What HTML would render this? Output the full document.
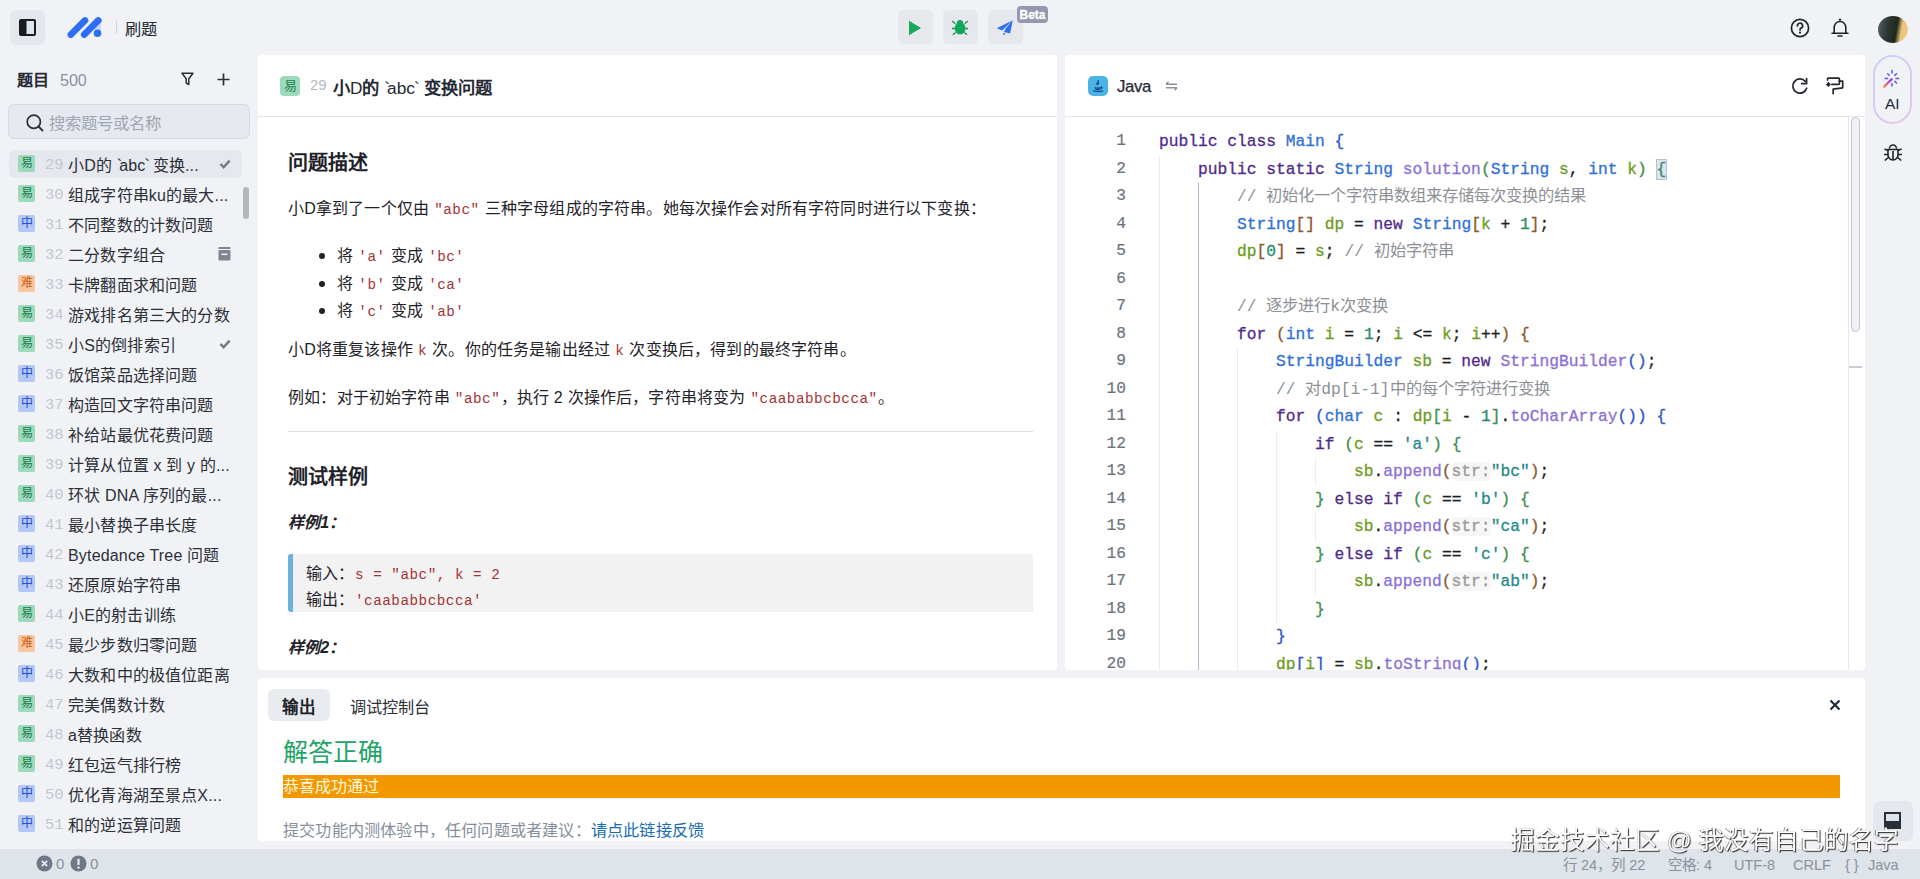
<!DOCTYPE html>
<html lang="zh-CN"><head><meta charset="utf-8">
<style>
*{box-sizing:border-box;margin:0;padding:0}
html,body{width:1920px;height:879px;overflow:hidden}
body{background:#f1f2f6;font-family:"Liberation Sans",sans-serif;color:#252933;position:relative}
.abs{position:absolute}
/* top bar */
#tgl{left:10px;top:10px;width:35px;height:35px;background:#e4e7ed;border-radius:6px}
#topsep{left:116px;top:21px;width:1px;height:13px;background:#d0d3d9}
#brand{left:125px;top:19px;font-size:16.3px;color:#252933;line-height:20px}
.tbtn{top:10px;width:35px;height:34px;background:#e6e8ee;border-radius:5px}
#beta{left:1017px;top:6px;width:31px;height:17px;background:#9497ae;border-radius:4px;color:#fff;font-size:12px;font-weight:bold;text-align:center;line-height:19px;-webkit-text-stroke:.3px #fff}
/* sidebar */
#sbtitle{left:17px;top:70.5px;font-size:16px;font-weight:bold;line-height:20px}
#sbcount{left:60px;top:70.5px;font-size:16px;color:#8a919f;line-height:20px}
#search{left:8px;top:104px;width:242px;height:35px;background:#e6e9f0;border:1px solid #d6dae2;border-radius:6px}
#search span{position:absolute;left:40px;top:8px;font-size:16.4px;color:#a0a6b1;line-height:20px}
.row{position:absolute;left:9px;width:233px;height:28px}
.row.sel{background:#e5e8ef;border-radius:6px}
.bdg{position:absolute;left:9px;top:5px;width:17px;height:17px;border-radius:2px;font-size:12px;line-height:17px;text-align:center}
.e{background:#9dd9bb;color:#1c7d4d}
.m{background:#b3c7f8;color:#1f4fcc}
.h{background:#f8c6a0;color:#cc6218}
.num{position:absolute;left:36px;top:5px;font-family:"Liberation Mono",monospace;font-size:15.5px;color:#c3c7ce;line-height:20px}
.ttl{position:absolute;left:59px;top:4.5px;font-size:16px;letter-spacing:.17px;color:#2b2f36;line-height:22px;white-space:nowrap}
/* panels */
.panel{position:absolute;background:#fff;border-radius:4px;overflow:hidden}
#pp{left:258px;top:55px;width:799px;height:615px}
#cp{left:1065px;top:55px;width:800px;height:615px}
#op{left:258px;top:678px;width:1607px;height:163px}
.phead{position:absolute;left:0;top:0;width:100%;height:62px;border-bottom:1px solid #e4e6eb}
#status{left:0;top:849px;width:1920px;height:30px;background:#dfe3ea}
.st{position:absolute;top:7px;font-size:14.5px;color:#8a929c;line-height:18px;white-space:nowrap}
/* problem content */
.pc{position:absolute;left:30px;width:745px;color:#1f2329}
.h3{font-size:20px;font-weight:bold;line-height:28px}
.p{font-size:16px;line-height:24px;letter-spacing:.17px}
code,.mono{font-family:"Liberation Mono",monospace;color:#a33436;font-size:14.3px;letter-spacing:.5px;padding:0 .5px}
/* code */
.ln{position:absolute;left:0;width:61px;text-align:right;font-family:"Liberation Mono",monospace;font-size:16.2px;color:#6d7480;line-height:27.5px;-webkit-text-stroke:.2px}
.cl{position:absolute;left:94px;white-space:pre;font-family:"Liberation Mono",monospace;font-size:16.25px;line-height:27.5px;color:#1b1f24;-webkit-text-stroke:.3px}
.kw{color:#4f2a8c}.ty{color:#2f6fd9}.fn{color:#8b6fd8}.va{color:#6e9c1f}.nu{color:#2b8a68}.st2{color:#1f8a8a}.cm{color:#8c9096;-webkit-text-stroke:0}
.hint{color:#9a9a9a;background:#f6f6f6;border-radius:3px}
.hl{background:#dde3f6;outline:1px solid #b8bfda}
</style></head>
<body>
<div class="abs" id="tgl"><svg class="abs" style="left:9px;top:9px" width="17" height="17" viewBox="0 0 17 17"><rect x="1" y="1" width="15" height="15" rx="1" fill="#dde6ef" stroke="#1b1b1f" stroke-width="2"/><rect x="1" y="1" width="6.5" height="15" fill="#1b1b1f"/></svg></div>
<svg class="abs" style="left:66px;top:16px" width="38" height="24" viewBox="0 0 38 24"><path d="M35 4.2L35 15L27 13Z" fill="#c6d7f9"/><path d="M4.8 18.6L19 4.4M18.2 18.6L32.3 4.4" stroke="#2d6ef5" stroke-width="6.6" stroke-linecap="round"/><circle cx="31.5" cy="17.3" r="3.8" fill="#2d6ef5"/></svg>
<div class="abs" id="topsep"></div>
<div class="abs" id="brand">刷题</div>
<div class="abs tbtn" style="left:898px"><svg class="abs" style="left:10px;top:10px" width="14" height="16" viewBox="0 0 14 16"><path d="M1 .8L13 8L1 15.2Z" fill="#16a85b"/></svg></div>
<div class="abs tbtn" style="left:943px"><svg class="abs" style="left:8px;top:9px" width="18" height="18" viewBox="0 0 18 18"><ellipse cx="9" cy="4.2" rx="3.2" ry="3.2" fill="#0fa85a"/><ellipse cx="9.1" cy="9.6" rx="5.5" ry="6" fill="#0fa85a"/><path d="M1.1 2.1L4.3 4.8M16.9 2.1L13.7 4.8M.9 9.5H3.8M17.1 9.5H14.4M1.8 15.8L4.6 13.6M16.2 15.8L13.4 13.6" stroke="#1f8a55" stroke-width="1.3"/></svg></div>
<div class="abs tbtn" style="left:988px"><svg class="abs" style="left:8px;top:9px" width="18" height="18" viewBox="0 0 18 18"><path d="M16.8 1.2L0.8 9.3L6.2 11.6L9.2 8.4Z" fill="#2c6ef5"/><path d="M16.8 1.2L9.9 9.3L8 13L14.1 14.6Z" fill="#2c6ef5"/><path d="M7.4 13.9L9.2 14.3L8.1 15.9L7.1 15.4Z" fill="#2c55c8"/></svg></div>
<div class="abs" id="beta">Beta</div>
<svg class="abs" style="left:1790px;top:18px" width="20" height="20" viewBox="0 0 20 20"><circle cx="10" cy="10" r="8.6" fill="none" stroke="#1f2329" stroke-width="1.7"/><path d="M7.4 7.8a2.6 2.6 0 1 1 3.8 2.3c-.8.4-1.2.9-1.2 1.8" fill="none" stroke="#1f2329" stroke-width="1.7" stroke-linecap="round"/><circle cx="10" cy="14.6" r="1.1" fill="#1f2329"/></svg>
<svg class="abs" style="left:1830px;top:18px" width="20" height="20" viewBox="0 0 20 20"><path d="M4.2 15V9.3a5.8 5.8 0 0 1 11.6 0V15M2 15.2H18M8 18H12M9.4 1.6h1.2" fill="none" stroke="#1f2329" stroke-width="1.6" stroke-linecap="round"/></svg>
<div class="abs" style="left:1878px;top:16px;width:30px;height:27px;border-radius:50%;background:linear-gradient(100deg,#59636a 0%,#2c3530 35%,#1e2a1c 60%,#e8c47c 75%,#f2cd88 100%)"></div>
<div class="abs" style="left:1873px;top:55px;width:39px;height:69px;border-radius:20px;padding:2px;background:linear-gradient(135deg,#c9d3fb,#d8c8f3 50%,#e8c6e8)"><div style="width:35px;height:65px;border-radius:18px;background:#f1f2f6"></div></div>
<svg class="abs" style="left:1882px;top:69px" width="20" height="20" viewBox="0 0 20 20"><defs><linearGradient id="wg" x1="0" y1="1" x2="1" y2="0"><stop offset="0" stop-color="#f58a3a"/><stop offset=".6" stop-color="#c04fc8"/><stop offset="1" stop-color="#7a40e8"/></linearGradient></defs><path d="M2.2 17.6L9.6 10.2" stroke="url(#wg)" stroke-width="2.3" stroke-linecap="round"/><path d="M10 1.5V4M10 14.6V17M16.6 9.4H14M5.6 9.4H3.2M14.5 4.8L12.9 6.4M5.7 4.8L7.1 6.2M14.5 14L12.9 12.4" stroke="#5a58ea" stroke-width="1.5" stroke-linecap="round"/></svg>
<div class="abs" style="left:1885px;top:95px;font-size:15.5px;color:#252933;line-height:18px">AI</div>
<svg class="abs" style="left:1883px;top:142px" width="20" height="21" viewBox="0 0 20 21"><path d="M6.5 6.5a3.5 3.5 0 0 1 7 0" fill="none" stroke="#1f2329" stroke-width="1.6"/><path d="M5 7.5H15V13a5 5 0 0 1-10 0Z" fill="none" stroke="#1f2329" stroke-width="1.6"/><path d="M10 9V18M1.5 7L5 8.5M18.5 7L15 8.5M1 12.5H5M19 12.5H15M1.8 18.5L5.3 15.5M18.2 18.5L14.7 15.5" stroke="#1f2329" stroke-width="1.6"/></svg>
<div class="abs" style="left:1873px;top:801px;width:40px;height:40px;border-radius:7px;background:#e4e7ed"><svg class="abs" style="left:11px;top:11px" width="17" height="17" viewBox="0 0 17 17"><rect x="1" y="1" width="15" height="15" fill="#dde6ef" stroke="#2a2e36" stroke-width="2"/><rect x="1" y="9" width="15" height="7" fill="#2a2e36"/></svg></div>


<div class="abs" id="sbtitle">题目</div>
<div class="abs" id="sbcount">500</div>
<div class="abs" id="search"><svg class="abs" style="left:17px;top:9px" width="18" height="18" viewBox="0 0 18 18"><circle cx="7.8" cy="7.8" r="6.6" fill="none" stroke="#2b2f36" stroke-width="1.7"/><path d="M12.5 12.5L16.5 16.5" stroke="#2b2f36" stroke-width="1.8" stroke-linecap="round"/></svg><span>搜索题号或名称</span></div>
<svg class="abs" style="left:181px;top:72px" width="13" height="14" viewBox="0 0 13 14"><path d="M1 1.2H12L7.8 6.8V12.6L5.2 11V6.8Z" fill="none" stroke="#2b2f36" stroke-width="1.5" stroke-linejoin="round"/></svg>
<svg class="abs" style="left:217px;top:73px" width="13" height="13" viewBox="0 0 13 13"><path d="M6.5 .5V12.5M.5 6.5H12.5" stroke="#2b2f36" stroke-width="1.7"/></svg>


<div class="row sel" style="top:150px"><div class="bdg e">易</div><div class="num">29</div><div class="ttl">小D的 <span style="margin-right:-3px">`</span>abc<span style="margin-left:-1px;margin-right:-2px">`</span> 变换...</div><svg class="abs" style="left:210px;top:8px" width="12" height="12" viewBox="0 0 12 12"><path d="M1.5 6L4.6 9.2L10.6 2.6" fill="none" stroke="#737984" stroke-width="2.4"/></svg></div>
<div class="row" style="top:180px"><div class="bdg e">易</div><div class="num">30</div><div class="ttl">组成字符串ku的最大...</div></div>
<div class="row" style="top:210px"><div class="bdg m">中</div><div class="num">31</div><div class="ttl">不同整数的计数问题</div></div>
<div class="row" style="top:240px"><div class="bdg e">易</div><div class="num">32</div><div class="ttl">二分数字组合</div><svg class="abs" style="left:209px;top:7px" width="13" height="14" viewBox="0 0 13 14"><rect x="0.5" y="0" width="12" height="2" rx=".8" fill="#7f858f"/><rect x="0.5" y="3" width="12" height="10.5" rx="1.2" fill="#7f858f"/><rect x="3.5" y="6.5" width="6" height="1.6" fill="#eef0f4"/></svg></div>
<div class="row" style="top:270px"><div class="bdg h">难</div><div class="num">33</div><div class="ttl">卡牌翻面求和问题</div></div>
<div class="row" style="top:300px"><div class="bdg e">易</div><div class="num">34</div><div class="ttl">游戏排名第三大的分数</div></div>
<div class="row" style="top:330px"><div class="bdg e">易</div><div class="num">35</div><div class="ttl">小S的倒排索引</div><svg class="abs" style="left:210px;top:8px" width="12" height="12" viewBox="0 0 12 12"><path d="M1.5 6L4.6 9.2L10.6 2.6" fill="none" stroke="#737984" stroke-width="2.4"/></svg></div>
<div class="row" style="top:360px"><div class="bdg m">中</div><div class="num">36</div><div class="ttl">饭馆菜品选择问题</div></div>
<div class="row" style="top:390px"><div class="bdg m">中</div><div class="num">37</div><div class="ttl">构造回文字符串问题</div></div>
<div class="row" style="top:420px"><div class="bdg e">易</div><div class="num">38</div><div class="ttl">补给站最优花费问题</div></div>
<div class="row" style="top:450px"><div class="bdg e">易</div><div class="num">39</div><div class="ttl">计算从位置 x 到 y 的...</div></div>
<div class="row" style="top:480px"><div class="bdg e">易</div><div class="num">40</div><div class="ttl">环状 DNA 序列的最...</div></div>
<div class="row" style="top:510px"><div class="bdg m">中</div><div class="num">41</div><div class="ttl">最小替换子串长度</div></div>
<div class="row" style="top:540px"><div class="bdg m">中</div><div class="num">42</div><div class="ttl">Bytedance Tree 问题</div></div>
<div class="row" style="top:570px"><div class="bdg m">中</div><div class="num">43</div><div class="ttl">还原原始字符串</div></div>
<div class="row" style="top:600px"><div class="bdg e">易</div><div class="num">44</div><div class="ttl">小E的射击训练</div></div>
<div class="row" style="top:630px"><div class="bdg h">难</div><div class="num">45</div><div class="ttl">最少步数归零问题</div></div>
<div class="row" style="top:660px"><div class="bdg m">中</div><div class="num">46</div><div class="ttl">大数和中的极值位距离</div></div>
<div class="row" style="top:690px"><div class="bdg e">易</div><div class="num">47</div><div class="ttl">完美偶数计数</div></div>
<div class="row" style="top:720px"><div class="bdg e">易</div><div class="num">48</div><div class="ttl">a替换函数</div></div>
<div class="row" style="top:750px"><div class="bdg e">易</div><div class="num">49</div><div class="ttl">红包运气排行榜</div></div>
<div class="row" style="top:780px"><div class="bdg m">中</div><div class="num">50</div><div class="ttl">优化青海湖至景点X...</div></div>
<div class="row" style="top:810px"><div class="bdg m">中</div><div class="num">51</div><div class="ttl">和的逆运算问题</div></div>
<div class="abs" style="left:243px;top:187px;width:6px;height:32px;border-radius:3px;background:#b3b7be"></div>
<div class="panel" id="pp"><div class="phead"></div>
<div class="bdg e abs" style="left:22px;top:21px;width:20px;height:20px;line-height:20px;font-size:13px;border-radius:4px">易</div>
<div class="abs" style="left:52px;top:22px;font-size:15px;color:#b5bac3;line-height:16px">29</div>
<div class="abs" style="left:75px;top:20.5px;font-size:17.3px;font-weight:bold;color:#252933;line-height:24px;white-space:nowrap">小<span style="font-weight:normal">D</span>的 <span style="font-weight:normal"><span style="margin-right:-3px">`</span>abc<span style="margin-left:-1px;margin-right:-1px">`</span></span> 变换问题</div>
<div class="pc h3" style="top:93.5px">问题描述</div>
<div class="pc p" style="top:141.5px">小D拿到了一个仅由 <code>"abc"</code> 三种字母组成的字符串。她每次操作会对所有字符同时进行以下变换：</div>
<div class="abs" style="left:61px;top:197.5px;width:6px;height:6px;border-radius:3px;background:#1f2329"></div>
<div class="abs" style="left:61px;top:225.5px;width:6px;height:6px;border-radius:3px;background:#1f2329"></div>
<div class="abs" style="left:61px;top:252.5px;width:6px;height:6px;border-radius:3px;background:#1f2329"></div>
<div class="pc p" style="left:79px;top:188.5px">将 <code>'a'</code> 变成 <code>'bc'</code></div>
<div class="pc p" style="left:79px;top:216.5px">将 <code>'b'</code> 变成 <code>'ca'</code></div>
<div class="pc p" style="left:79px;top:243.5px">将 <code>'c'</code> 变成 <code>'ab'</code></div>
<div class="pc p" style="top:282.5px">小D将重复该操作 <code>k</code> 次。你的任务是输出经过 <code>k</code> 次变换后，得到的最终字符串。</div>
<div class="pc p" style="top:330.5px">例如：对于初始字符串 <code>"abc"</code>，执行 2 次操作后，字符串将变为 <code>"caababbcbcca"</code>。</div>
<div class="abs" style="left:30px;top:375.5px;width:745px;height:1px;background:#dcdee2"></div>
<div class="pc h3" style="top:407.5px">测试样例</div>
<div class="pc p" style="top:455.5px;font-weight:bold;font-style:italic">样例1：</div>
<div class="abs" style="left:30px;top:499px;width:745px;height:58px;background:#f2f2f2;border-left:5px solid #6cb0de;border-radius:3px 0 0 3px"></div>
<div class="pc p" style="left:48px;top:506.5px">输入：<code>s = "abc", k = 2</code></div>
<div class="pc p" style="left:48px;top:532.5px">输出：<code>'caababbcbcca'</code></div>
<div class="pc p" style="top:580.5px;font-weight:bold;font-style:italic">样例2：</div>
</div>
<div class="panel" id="cp"><div class="phead"></div>
<div class="abs" style="left:23px;top:21px;width:20px;height:20px;border-radius:5px;background:#4ab3e8"><svg width="20" height="20" viewBox="0 0 20 20"><path d="M10.5 4c-1.5 1.5 1 2.5-.5 4.5M9 6.5c-.8 1 .8 1.5 0 2.5" stroke="#0f3d7a" stroke-width="1.2" fill="none"/><path d="M6.5 11.5c1.5.6 5 .6 6.5 0M7 13c1.3.5 4.5.5 5.5 0M5 14.8c2.5 1 8 1 10 0M13 11c1.2-.2 1.5 1-.2 1.6" stroke="#0f3d7a" stroke-width="1.1" fill="none"/></svg></div>
<div class="abs" style="left:52px;top:21px;font-size:16.8px;letter-spacing:-.4px;color:#252933;line-height:22px;-webkit-text-stroke:.25px">Java</div>
<svg class="abs" style="left:100px;top:26px" width="13" height="10" viewBox="0 0 13 10"><path d="M1 3.2H12M1 3.2L3.5 .8M12 6.8H1M12 6.8L9.5 9.2" stroke="#8a8f99" stroke-width="1.4" fill="none"/></svg>
<svg class="abs" style="left:726px;top:22px" width="19" height="19" viewBox="0 0 19 19"><path d="M15.7 11.2A7.1 7.1 0 1 1 14.3 4.4" stroke="#22262d" stroke-width="1.7" fill="none" stroke-linecap="round"/><path d="M15.6 1.6V6.7H10.7" stroke="#22262d" stroke-width="1.7" fill="none" stroke-linecap="round" stroke-linejoin="round"/></svg>
<svg class="abs" style="left:760px;top:22px" width="20" height="19" viewBox="0 0 20 19"><path d="M2.6 3V1.8Q2.6 1.05 3.4 1.05H13.6Q14.4 1.05 14.4 1.8V6.6Q14.4 7.4 13.6 7.4H6.9" stroke="#22262d" stroke-width="1.7" fill="none" stroke-linecap="round"/><path d="M14.4 4.2H17.7V10.8L8.2 12.1V16.7" stroke="#22262d" stroke-width="1.7" fill="none" stroke-linejoin="round" stroke-linecap="round"/><path d="M3.4 4.8L5.9 7.4L3.4 10L.9 7.4Z" fill="#22262d"/></svg>
<div class="abs" style="left:94px;top:100.5px;width:1px;height:522.5px;background:#ececf0"></div>
<div class="abs" style="left:133px;top:128px;width:1px;height:495.0px;background:#b4b8cc"></div>
<div class="abs" style="left:172px;top:293px;width:1px;height:330.0px;background:#ececf0"></div>
<div class="abs" style="left:211px;top:375.5px;width:1px;height:192.5px;background:#ececf0"></div>
<div class="abs" style="left:250px;top:403px;width:1px;height:27.5px;background:#ececf0"></div>
<div class="abs" style="left:250px;top:458px;width:1px;height:27.5px;background:#ececf0"></div>
<div class="abs" style="left:250px;top:513px;width:1px;height:27.5px;background:#ececf0"></div>
<div class="ln" style="top:73px">1</div><div class="cl" style="top:73px"><span class="kw">public</span> <span class="kw">class</span> <span class="ty">Main</span> <span style="color:#2f55cf">{</span></div>
<div class="ln" style="top:100.5px">2</div><div class="cl" style="top:100.5px">    <span class="kw">public</span> <span class="kw">static</span> <span class="ty">String</span> <span class="fn">solution</span><span style="color:#3f8f4f">(</span><span class="ty">String</span> <span class="va">s</span>, <span class="ty">int</span> <span class="va">k</span><span style="color:#3f8f4f">)</span> <span class="hl"><span style="color:#3f8f4f">{</span></span></div>
<div class="ln" style="top:128px">3</div><div class="cl" style="top:128px">        <span class="cm">// 初始化一个字符串数组来存储每次变换的结果</span></div>
<div class="ln" style="top:155.5px">4</div><div class="cl" style="top:155.5px">        <span class="ty">String</span><span style="color:#8b5a2b">[]</span> <span class="va">dp</span> = <span class="kw">new</span> <span class="ty">String</span><span style="color:#8b5a2b">[</span><span class="va">k</span> + <span class="nu">1</span><span style="color:#8b5a2b">]</span>;</div>
<div class="ln" style="top:183px">5</div><div class="cl" style="top:183px">        <span class="va">dp</span><span style="color:#8b5a2b">[</span><span class="nu">0</span><span style="color:#8b5a2b">]</span> = <span class="va">s</span>; <span class="cm">// 初始字符串</span></div>
<div class="ln" style="top:210.5px">6</div><div class="cl" style="top:210.5px"></div>
<div class="ln" style="top:238px">7</div><div class="cl" style="top:238px">        <span class="cm">// 逐步进行k次变换</span></div>
<div class="ln" style="top:265.5px">8</div><div class="cl" style="top:265.5px">        <span class="kw">for</span> <span style="color:#8b5a2b">(</span><span class="ty">int</span> <span class="va">i</span> = <span class="nu">1</span>; <span class="va">i</span> &lt;= <span class="va">k</span>; <span class="va">i</span>++<span style="color:#8b5a2b">)</span> <span style="color:#8b5a2b">{</span></div>
<div class="ln" style="top:293px">9</div><div class="cl" style="top:293px">            <span class="ty">StringBuilder</span> <span class="va">sb</span> = <span class="kw">new</span> <span class="fn">StringBuilder</span><span style="color:#2f55cf">()</span>;</div>
<div class="ln" style="top:320.5px">10</div><div class="cl" style="top:320.5px">            <span class="cm">// 对dp[i-1]中的每个字符进行变换</span></div>
<div class="ln" style="top:348px">11</div><div class="cl" style="top:348px">            <span class="kw">for</span> <span style="color:#2f55cf">(</span><span class="ty">char</span> <span class="va">c</span> : <span class="va">dp</span><span style="color:#3f8f4f">[</span><span class="va">i</span> - <span class="nu">1</span><span style="color:#3f8f4f">]</span>.<span class="fn">toCharArray</span><span style="color:#2f55cf">()</span><span style="color:#2f55cf">)</span> <span style="color:#2f55cf">{</span></div>
<div class="ln" style="top:375.5px">12</div><div class="cl" style="top:375.5px">                <span class="kw">if</span> <span style="color:#3f8f4f">(</span><span class="va">c</span> == <span class="st2">&#39;a&#39;</span><span style="color:#3f8f4f">)</span> <span style="color:#3f8f4f">{</span></div>
<div class="ln" style="top:403px">13</div><div class="cl" style="top:403px">                    <span class="va">sb</span>.<span class="fn">append</span><span style="color:#8b5a2b">(</span><span class="hint">str:</span><span class="st2">&quot;bc&quot;</span><span style="color:#8b5a2b">)</span>;</div>
<div class="ln" style="top:430.5px">14</div><div class="cl" style="top:430.5px">                <span style="color:#3f8f4f">}</span> <span class="kw">else</span> <span class="kw">if</span> <span style="color:#3f8f4f">(</span><span class="va">c</span> == <span class="st2">&#39;b&#39;</span><span style="color:#3f8f4f">)</span> <span style="color:#3f8f4f">{</span></div>
<div class="ln" style="top:458px">15</div><div class="cl" style="top:458px">                    <span class="va">sb</span>.<span class="fn">append</span><span style="color:#8b5a2b">(</span><span class="hint">str:</span><span class="st2">&quot;ca&quot;</span><span style="color:#8b5a2b">)</span>;</div>
<div class="ln" style="top:485.5px">16</div><div class="cl" style="top:485.5px">                <span style="color:#3f8f4f">}</span> <span class="kw">else</span> <span class="kw">if</span> <span style="color:#3f8f4f">(</span><span class="va">c</span> == <span class="st2">&#39;c&#39;</span><span style="color:#3f8f4f">)</span> <span style="color:#3f8f4f">{</span></div>
<div class="ln" style="top:513px">17</div><div class="cl" style="top:513px">                    <span class="va">sb</span>.<span class="fn">append</span><span style="color:#8b5a2b">(</span><span class="hint">str:</span><span class="st2">&quot;ab&quot;</span><span style="color:#8b5a2b">)</span>;</div>
<div class="ln" style="top:540.5px">18</div><div class="cl" style="top:540.5px">                <span style="color:#3f8f4f">}</span></div>
<div class="ln" style="top:568px">19</div><div class="cl" style="top:568px">            <span style="color:#2f55cf">}</span></div>
<div class="ln" style="top:595.5px">20</div><div class="cl" style="top:595.5px">            <span class="va">dp</span><span style="color:#2f55cf">[</span><span class="va">i</span><span style="color:#2f55cf">]</span> = <span class="va">sb</span>.<span class="fn">toString</span><span style="color:#2f55cf">()</span>;</div>
<div class="abs" style="left:783px;top:62px;width:1px;height:553px;background:#e6e8ec"></div>
<div class="abs" style="left:786px;top:62px;width:9px;height:215px;border-radius:5px;border:1px solid #c3c7d2;background:#f1f2f6"></div>
<div class="abs" style="left:784px;top:311px;width:13px;height:2px;background:#c9ccd3"></div>
</div>
<div class="panel" id="op">
<div class="abs" style="left:10px;top:11px;width:62px;height:32px;border-radius:6px;background:#e8ebf0"></div>
<div class="abs" style="left:24px;top:19px;font-size:16.5px;font-weight:bold;color:#1f2329;line-height:20px">输出</div>
<div class="abs" style="left:92px;top:19px;font-size:16.2px;color:#2b2f36;line-height:20px">调试控制台</div>
<svg class="abs" style="left:1571px;top:21px" width="12" height="12" viewBox="0 0 12 12"><path d="M1.5 1.5L10.5 10.5M10.5 1.5L1.5 10.5" stroke="#1f2a3a" stroke-width="2.2"/></svg>
<div class="abs" style="left:25px;top:57px;font-size:25px;color:#20a567;line-height:34px">解答正确</div>
<div class="abs" style="left:25px;top:97px;width:1557px;height:23px;background:#f39800"></div>
<div class="abs" style="left:25px;top:98px;font-size:16px;color:#fff8dc;line-height:22px">恭喜成功通过</div>
<div class="abs" style="left:25px;top:141px;font-size:16.2px;letter-spacing:.2px;color:#86909c;line-height:22px">提交功能内测体验中，任何问题或者建议：<span style="color:#1a6cb0">请点此链接反馈</span></div>
</div>
<div class="abs" id="status">
<svg class="abs" style="left:36px;top:6px" width="17" height="17" viewBox="0 0 17 17"><circle cx="8.5" cy="8.5" r="8" fill="#6f7886"/><path d="M5.8 5.8L11.2 11.2M11.2 5.8L5.8 11.2" stroke="#e8ecf2" stroke-width="1.7"/></svg>
<div class="st" style="left:56px;top:6px;font-size:15px">0</div>
<svg class="abs" style="left:70px;top:6px" width="17" height="17" viewBox="0 0 17 17"><circle cx="8.5" cy="8.5" r="8" fill="#6f7886"/><path d="M8.5 3.8V10" stroke="#e8ecf2" stroke-width="2.2"/><circle cx="8.5" cy="12.6" r="1.2" fill="#e8ecf2"/></svg>
<div class="st" style="left:90px;top:6px;font-size:15px">0</div>
<div class="st" style="left:1563px">行 24，列 22</div>
<div class="st" style="left:1668px">空格: 4</div>
<div class="st" style="left:1734px">UTF-8</div>
<div class="st" style="left:1793px">CRLF</div>
<div class="st" style="left:1845px">{ }</div>
<div class="st" style="left:1868px">Java</div>
</div>
<div class="abs" style="left:1510px;top:825px;font-size:24.7px;line-height:32px;color:#fff;white-space:nowrap;text-shadow:1px 1px 1px #2a2a2a,-.5px -.5px .5px #888;will-change:transform">掘金技术社区 @ 我没有自己的名字</div>
</body></html>
